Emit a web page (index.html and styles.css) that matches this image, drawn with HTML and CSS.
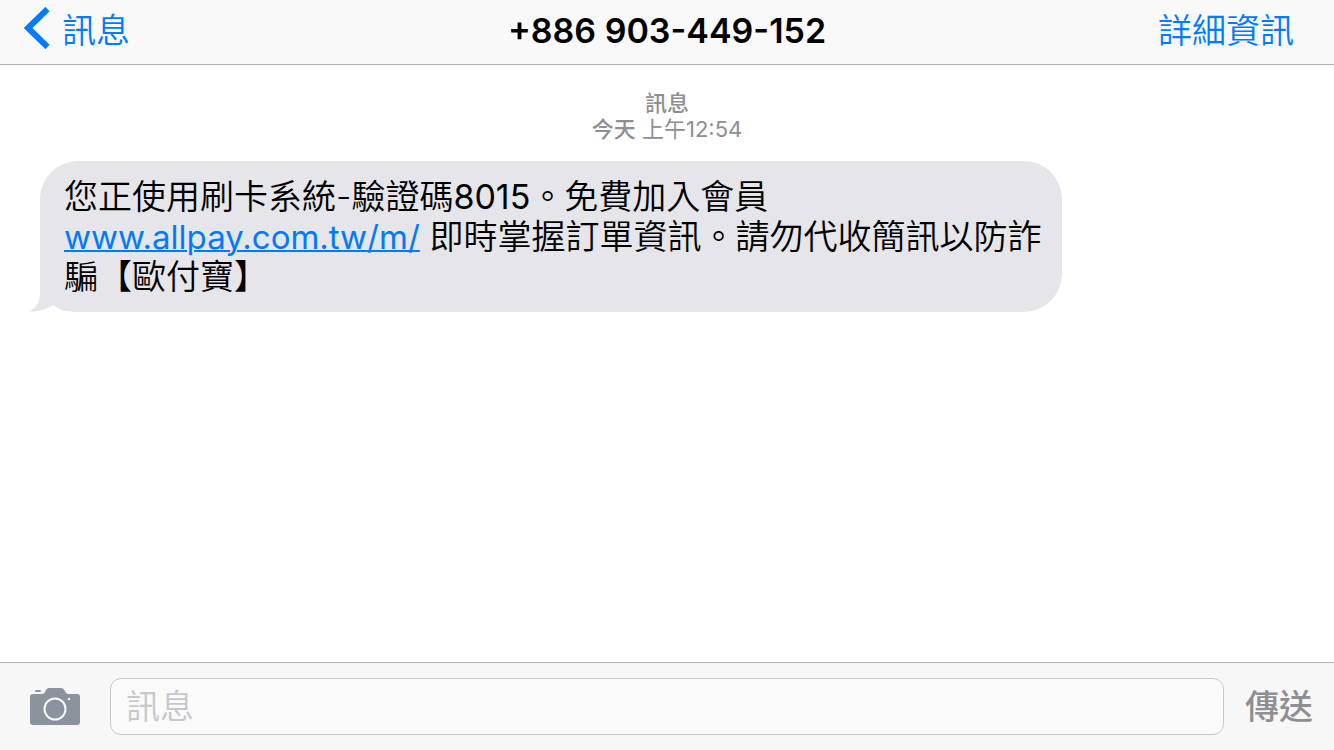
FILE: index.html
```html
<!DOCTYPE html>
<html lang="zh-Hant">
<head>
    <meta charset="UTF-8">
    <meta name="viewport" content="width=device-width, initial-scale=1.0">
    <title>訊息</title>
    <link rel="stylesheet" href="styles.css">
</head>
<body>
    <header class="navbar">
        <div class="nav-left">
            <a href="#" class="nav-link">
                <svg class="chevron" width="26" height="42" viewBox="0 0 26 42">
                    <path d="M23.5 2 L4 21 L23.5 40" fill="none" stroke="#007aff" stroke-width="6"/>
                </svg>
                訊息
            </a>
        </div>
        <h1 class="title">+886 903-449-152</h1>
        <div class="nav-right">
            <a href="#" class="nav-link details">詳細資訊</a>
        </div>
    </header>

    <main class="thread">
        <div class="timestamp">
            <div class="service">訊息</div>
            <div><span class="day">今天</span> 上午12:54</div>
        </div>
        <div class="bubble">
            您正使用刷卡系統-驗證碼<span class="code">8015</span>。免費加入會員 <a href="#" class="msg-link">www.allpay.com.tw/m/</a> 即時掌握訂單資訊。請勿代收簡訊以防詐騙【歐付寶】
            <svg class="tail" width="49" height="36" viewBox="0 0 49 36">
                <path d="M11 0 V18 C11 26 7 32 0 35.5 C9 36 18 33 24 29 C31 34 38 36 49 36 V0 Z" fill="#e5e5ea"/>
            </svg>
        </div>
    </main>

    <form class="composer">
        <button type="button" class="camera" aria-label="相機">
            <svg width="50" height="37" viewBox="0 0 50 37">
                <path d="M3 6 H12 C14 6 14.5 5 15.5 3 C16.5 1 17.5 0 19 0 H31 C33 0 33.8 1 34.8 3 C35.8 5 36.5 6 38.5 6 H47 Q50 6 50 9 V34 Q50 37 47 37 H3 Q0 37 0 34 V9 Q0 6 3 6 Z" fill="#8a929d"/>
                <rect x="5" y="2" width="6" height="2" rx="1" fill="#8a929d"/>
                <circle cx="25" cy="21" r="10.5" fill="none" stroke="#f9f9f9" stroke-width="2"/>
                <circle cx="39" cy="11" r="1.2" fill="#f9f9f9"/>
            </svg>
        </button>
        <input type="text" class="message-input" placeholder="訊息" aria-label="訊息">
        <button type="button" class="send">傳送</button>
    </form>
</body>
</html>
```

FILE: styles.css
```css
* {
    box-sizing: border-box;
}
body {
    margin: 0;
    min-height: 100vh;
    display: flex;
    flex-direction: column;
    font-family: Inter, "Noto Sans CJK TC", sans-serif;
    font-size: 34px;
    font-weight: 350;
    line-height: 40px;
    color: #000;
    background: #fff;
}
a {
    color: #007aff;
}

/* top bar */
.navbar {
    display: flex;
    align-items: center;
    height: 65px;
    padding: 0 24px 2px;
    background: #f9f9f9;
    border-bottom: 1px solid #b2b2b2;
}
.nav-left,
.nav-right {
    flex: 1;
    display: flex;
}
.nav-right {
    justify-content: flex-end;
}
.nav-link {
    display: flex;
    align-items: center;
    gap: 12px;
    text-decoration: none;
}
.details {
    margin-right: 16px;
}
.chevron {
    display: block;
    margin-bottom: 6px;
}
.title {
    margin: 0;
    font-size: 34px;
    font-weight: 600;
}

/* conversation */
.thread {
    flex: 1;
    padding: 25px 32px 25px 40px;
}
.timestamp {
    margin: 0 0 19px -8px;
    text-align: center;
    font-size: 22px;
    font-weight: 400;
    line-height: 26px;
    color: #8e8e93;
}
.service,
.day {
    font-weight: 500;
}
.bubble {
    position: relative;
    width: fit-content;
    max-width: 81%;
    padding: 16px 20px 15px 24px;
    border-radius: 38px;
    background: #e5e5ea;
}
.code {
    font-weight: 400;
}
.msg-link {
    font-size: 33px;
    font-weight: 400;
    text-decoration-thickness: 2px;
}
.tail {
    position: absolute;
    left: -11px;
    bottom: 0;
    z-index: -1;
}

/* bottom bar */
.composer {
    display: flex;
    align-items: center;
    height: 88px;
    padding: 0 21px 0 30px;
    background: #f7f7f7;
    border-top: 1px solid #b2b2b2;
}
.camera,
.send {
    padding: 0;
    border: none;
    background: none;
    font: inherit;
    cursor: pointer;
}
.camera svg {
    display: block;
}
.message-input {
    flex: 1;
    min-width: 0;
    height: 57px;
    margin: 0 21px 0 30px;
    padding: 0 15px;
    border: 1px solid #c8c8cd;
    border-radius: 11px;
    background: #fafafa;
    font: inherit;
}
.message-input::placeholder {
    color: #c7c7cc;
    opacity: 1;
}
.send {
    color: #8e8e93;
    font-weight: 500;
}
```
